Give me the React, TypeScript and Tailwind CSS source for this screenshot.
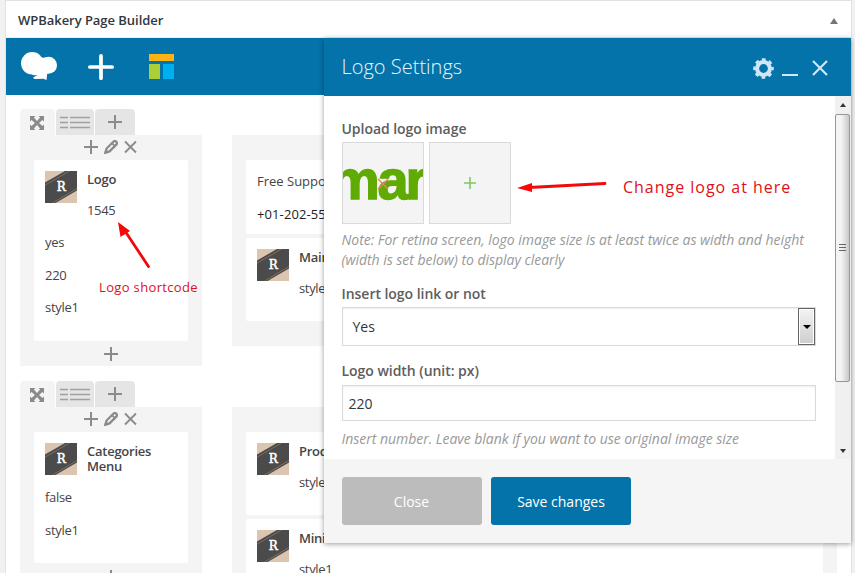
import React from "react";

type LineProps = { children: React.ReactNode; className?: string };

const Line = ({ children, className = "" }: LineProps) => (
  <p className={`whitespace-nowrap text-[13px] leading-4 ${className}`}>{children}</p>
);

const Plus = ({ size = 14, className = "", stroke = 2, round = false }: { size?: number; className?: string; stroke?: number; round?: boolean }) => (
  <svg width={size} height={size} viewBox="0 0 14 14" className={className}>
    <path d={round ? "M7 1v12M1 7h12" : "M7 0v14M0 7h14"} stroke="currentColor" strokeWidth={stroke} strokeLinecap={round ? "round" : "butt"} fill="none" />
  </svg>
);

const Badge = () => (
  <svg width="32" height="32" viewBox="0 0 32 32" className="shrink-0">
    <rect width="32" height="32" fill="#dbc5b0" />
    <path d="M0 11.500 20 0h12v19.500L10.500 32H0z" fill="#4b4b4b" />
    <path d="M0 14.200 24.500 0M7.500 32 32 17.500" stroke="#a28870" strokeWidth=".6" />
    <text x="16.200" y="20" textAnchor="middle" fontSize="12" fontFamily="'DejaVu Serif Condensed','DejaVu Serif','Liberation Serif',serif" fill="#fff" stroke="#fff" strokeWidth=".5" textLength="9" lengthAdjust="spacingAndGlyphs">R</text>
  </svg>
);

const Tabs = () => (
  <div className="flex h-[26px] gap-px text-[#8b8b8b]">
    <div className="flex w-[35px] items-center justify-center rounded-t-sm bg-[#f4f4f4] pr-px pt-px">
      <svg width="14" height="14" viewBox="0 0 14 14" fill="currentColor">
        <path d="M0 0h5.500L3.900 1.600 7 4.900l3.100-3.300L8.500 0H14v5.500l-1.600-1.600L9.100 7l3.300 3.100L14 8.500V14H8.500l1.600-1.600L7 9.100l-3.100 3.300L5.500 14H0V8.500l1.600 1.600L4.900 7 1.600 3.900 0 5.500z" />
      </svg>
    </div>
    <div className="flex w-[38px] items-center justify-center rounded-t-sm bg-[#e5e5e5] pt-[2px]">
      <svg width="30" height="14" viewBox="0 0 30 14" stroke="#a0a0a0" strokeWidth="1.600">
        <path d="M0 1.500h8M10 1.500h20M0 6.500h8M10 6.500h20M0 11.500h8M10 11.500h20" />
      </svg>
    </div>
    <div className="flex w-10 items-center justify-center rounded-t-sm bg-[#e5e5e5]">
      <Plus />
    </div>
  </div>
);

const Controls = () => (
  <div className="flex h-[25px] items-center justify-center gap-[6px] pb-px pr-[2px] text-[#8b8b8b]">
    <Plus />
    <svg width="14" height="14" viewBox="0 0 14 14">
      <path d="M1.500 12.500 2.600 8.500 9.600 1.500Q11 .4 12.300 1.700T12.500 4.400L5.500 11.400z" fill="none" stroke="currentColor" strokeWidth="2.300" />
      <path d="M0 14 1.300 9l3.700 3.700zM8 2l4 4-1.300 1.200-4-4z" fill="currentColor" />
      <path d="M4.500 9.500 9 5" stroke="#f4f4f4" strokeWidth="1" />
    </svg>
    <svg width="13" height="14" viewBox="0 0 13 14">
      <path d="M1 1.500l11 11M12 1.500l-11 11" stroke="currentColor" strokeWidth="1.900" />
    </svg>
  </div>
);

const Element = ({ title, value, className }: { title: React.ReactNode; value?: string; className: string }) => (
  <div className={`flex shrink-0 gap-[10px] px-[11px] pt-[11px] ${className}`}>
    <Badge />
    <div className="pt-px tracking-[-0.35px]">
      <h3 className="whitespace-nowrap text-[13px] font-semibold leading-[15px] tracking-[-0.25px] text-[#454545]">{title}</h3>
      {value && <Line className="mt-[15px]">{value}</Line>}
    </div>
  </div>
);

const Caption = ({ children, className = "" }: LineProps) => (
  <label className={`-ml-[0.5px] block whitespace-nowrap text-[14px] font-semibold leading-5 tracking-[-0.04px] text-[#5d5d5d] ${className}`}>{children}</label>
);

const Hint = ({ children, className = "" }: LineProps) => (
  <p className={`-ml-[0.5px] whitespace-nowrap text-[14px] italic leading-5 tracking-[-0.03px] text-[#999] ${className}`}>{children}</p>
);

const Gear = () => (
  <svg width="21" height="21" viewBox="0 0 21 21">
    <circle cx="10.500" cy="10.500" r="6.400" fill="none" stroke="#cde7f5" strokeWidth="4" />
    <circle cx="10.500" cy="10.500" r="9" fill="none" stroke="#cde7f5" strokeWidth="2.600" strokeDasharray="3.700 3.369" strokeDashoffset="1.850" />
  </svg>
);

const SettingsDialog = () => (
  <section className="absolute left-[324px] top-[38px] flex h-[505px] w-[527px] flex-col bg-white shadow-[0_1px_5px_rgba(0,0,0,0.4)]">
    <header className="flex h-[58px] shrink-0 items-center bg-[#0473aa] pl-[17.5px] pr-[23px]">
      <h2 className="whitespace-nowrap text-[20px] font-light leading-7 tracking-[0px] text-[#e8f6fd]">Logo Settings</h2>
      <div className="ml-auto flex items-center pt-[2px]">
        <Gear />
        <span className="ml-2 mt-[14px] h-[2px] w-4 bg-[#cde7f5]" />
        <svg width="16" height="16" viewBox="0 0 16 16" className="ml-[14px]">
          <path d="M1 1l14 14M15 1 1 15" stroke="#cde7f5" strokeWidth="2.200" />
        </svg>
      </div>
    </header>
    <div className="flex h-[363px] shrink-0">
      <div className="flex w-[511px] flex-col pl-[18px] pr-[19px] pt-[23px]">
        <Caption>Upload logo image</Caption>
        <div className="mt-[3px] flex gap-[5px]">
          <div className="h-[82px] w-[82px] border border-[#dadada] bg-[#f4f4f4]">
            <svg width="80" height="80" viewBox="0 0 80 80">
              <g fill="#60aa04" stroke="#60aa04" strokeWidth="1.400" fontFamily="'Liberation Sans',Arial,sans-serif" fontWeight="700" fontSize="56">
                <text x="-13" y="56">m</text>
                <text x="34.500" y="56">a</text>
                <text x="62.500" y="56">r</text>
              </g>
              <path d="M35 36l10 10M45 36 35 46" stroke="#ef7d73" strokeWidth="1.400" />
            </svg>
          </div>
          <div className="flex h-[82px] w-[82px] items-center justify-center border border-[#dadada] bg-[#f4f4f4] text-[#79c763]">
            <Plus size={12} stroke={1.8} />
          </div>
        </div>
        <Hint className="mt-[6px]">Note: For retina screen, logo image size is at least twice as width and height</Hint>
        <Hint>(width is set below) to display clearly</Hint>
        <Caption className="mt-[14px]">Insert logo link or not</Caption>
        <div className="mt-[3px] flex h-[39px] shrink-0 items-center border border-[#dadada] bg-white pl-[9.5px] text-[14px] text-[#32373c] shadow-[inset_0_1px_2px_rgba(0,0,0,0.07)]">
          Yes
          <span className="ml-auto flex h-full w-[17px] items-center justify-center border border-[#666] bg-linear-to-b from-[#f3f3f3] to-[#cecece] shadow-[inset_0_0_0_1px_#fff]">
            <span className="border-x-[4px] border-t-[4px] border-x-transparent border-t-black" />
          </span>
        </div>
        <Caption className="mt-[15px]">Logo width (unit: px)</Caption>
        <div className="mt-1 flex h-9 shrink-0 items-center border border-[#dadada] bg-white pl-[5.5px] text-[14px] text-[#32373c] shadow-[inset_0_1px_2px_rgba(0,0,0,0.07)]">220</div>
        <Hint className="mt-2">Insert number. Leave blank if you want to use original image size</Hint>
      </div>
      <div className="flex w-4 flex-col items-center bg-[#f0f0f0]">
        <div className="flex h-[18px] items-center">
          <span className="border-x-[3.5px] border-b-[4px] border-x-transparent border-b-[#333]" />
        </div>
        <div className="flex h-[268px] w-[15px] items-center justify-center self-start rounded-[2px] border border-[#979797] bg-linear-to-r from-[#f4f4f4] from-40% to-[#c7c8cc]">
          <svg width="7" height="8" viewBox="0 0 7 8"><path d="M0 .5h7M0 3.500h7M0 6.500h7" stroke="#666" /></svg>
        </div>
        <div className="mt-auto flex h-[17px] items-center">
          <span className="border-x-[3.5px] border-t-[4px] border-x-transparent border-t-[#333]" />
        </div>
      </div>
    </div>
    <footer className="flex flex-1 items-center gap-[9px] bg-[#f5f5f5] pl-[18px] text-[14px] text-white">
      <button className="h-12 w-[140px] rounded-[3px] bg-[#bcbcbc] pr-px">Close</button>
      <button className="h-12 w-[140px] rounded-[3px] bg-[#0473aa]">Save changes</button>
    </footer>
  </section>
);

export default function App() {
  return (
    <main className="relative h-[573px] w-[855px] overflow-hidden bg-[#f1f1f1] font-['Open_Sans','Noto_Sans',sans-serif] text-[#444]">
      <div className="ml-[5px] flex h-[573px] w-[847px] flex-col overflow-hidden border-x border-t border-[#e2e2e2] bg-white">
        <header className="flex h-[37px] shrink-0 items-center justify-between border-b border-[#eee] pl-3 pr-[13px]">
          <h1 className="mt-[3px] whitespace-nowrap text-[13px] font-semibold tracking-[-0.04px] text-[#32373c]">WPBakery Page Builder</h1>
          <span className="mt-[3px] border-x-[4.5px] border-b-[6px] border-x-transparent border-b-[#72777c]" />
        </header>
        <nav className="flex h-[57px] shrink-0 items-center bg-[#0473aa] pl-[15px]">
          <svg width="36" height="28" viewBox="0 0 36 28" fill="#fff" className="-mt-[2px]">
            <circle cx="11.200" cy="11.300" r="11.200" />
            <circle cx="27.500" cy="13.200" r="8.500" />
            <path d="M17 3Q20 6.500 24 5.500L28 21l-1.800.8L25.500 28l-3-1.200-9 .2-1.500-1.500 4.500-2.200Q13 23.500 11 22.400z" />
          </svg>
          <Plus size={26} stroke={2} round className="ml-[31px] text-white" />
          <div className="ml-[35px] grid h-[25px] w-[25px] grid-cols-[11px_11px] grid-rows-[7px_15px] gap-[3px]">
            <span className="col-span-2 bg-[#fcb414]" />
            <span className="bg-[#abd037]" />
            <span className="bg-[#00aff0]" />
          </div>
        </nav>
        <div className="flex flex-col gap-[15px] pl-[14px] pr-[14px] pt-[14px]">
          <section className="h-[257px]">
            <Tabs />
            <div className="flex items-start gap-[30px]">
              <div className="h-[231px] w-[182px] bg-[#f4f4f4] px-[14px]">
                <Controls />
                <div className="h-[181px] rounded-[2px] bg-white">
                  <Element title="Logo" value="1545" className="h-[74px]" />
                  <div className="flex flex-col gap-[16.5px] pl-[11px] tracking-[-0.3px]">
                    <Line>yes</Line>
                    <Line>220</Line>
                    <Line>style1</Line>
                  </div>
                </div>
                <div className="flex h-[25px] items-center justify-center text-[#8b8b8b]"><Plus /></div>
              </div>
              <div className="flex h-[211px] flex-1 flex-col gap-1 bg-[#f4f4f4] px-[14px] pt-[25px]">
                <div className="flex h-[74px] shrink-0 flex-col gap-[17px] bg-white pl-[11px] pt-[13px]">
                  <Line>Free Support</Line>
                  <Line className="tracking-[0.1px] text-[#222]">+01-202-555-0181</Line>
                </div>
                <Element title="Main Menu" value="style1" className="h-[83px] rounded-[2px] bg-white" />
              </div>
            </div>
          </section>
          <section>
            <Tabs />
            <div className="flex items-start gap-[30px]">
              <div className="h-[180px] w-[182px] bg-[#f4f4f4] px-[14px]">
                <Controls />
                <div className="h-[131px] rounded-[2px] bg-white">
                  <div className="flex h-[57px] gap-[10px] px-[11px] pt-[11px]">
                    <Badge />
                    <h3 className="pt-px text-[13px] font-semibold leading-[15px] tracking-[-0.25px] text-[#454545]">Categories Menu</h3>
                  </div>
                  <div className="flex flex-col gap-[16.5px] pl-[11px] tracking-[-0.3px]">
                    <Line>false</Line>
                    <Line>style1</Line>
                  </div>
                </div>
                <div className="flex h-[25px] items-center justify-center pt-[2px] text-[#8b8b8b]"><Plus /></div>
              </div>
              <div className="flex h-[205px] flex-1 flex-col gap-1 bg-[#f4f4f4] px-[14px] pt-[25px]">
                <Element title="Products" value="style1" className="h-[83px] rounded-[2px] bg-white" />
                <Element title="Mini Cart" value="style1" className="h-[83px] rounded-[2px] bg-white" />
              </div>
            </div>
          </section>
        </div>
      </div>
      <SettingsDialog />
      <svg width="855" height="573" viewBox="0 0 855 573" className="pointer-events-none absolute inset-0" fill="#f70808">
        <path d="M148.500 266.500 123 228" stroke="#f00a0a" strokeWidth="2.800" strokeLinecap="round" />
        <path d="m118 222 12 9-9.500 6z" />
        <path d="M605 183.500 529 187.500" stroke="#f00a0a" strokeWidth="2.800" strokeLinecap="round" />
        <path d="m517 188 15-5v9z" />
      </svg>
      <span className="absolute left-[99px] top-[279px] whitespace-nowrap text-[13px] leading-4 tracking-[0.35px] text-[#e00f16]">Logo shortcode</span>
      <span className="absolute left-[623px] top-[176px] whitespace-nowrap text-[16px] leading-[22px] tracking-[0.98px] text-[#e00f16]">Change logo at here</span>
    </main>
  );
}
